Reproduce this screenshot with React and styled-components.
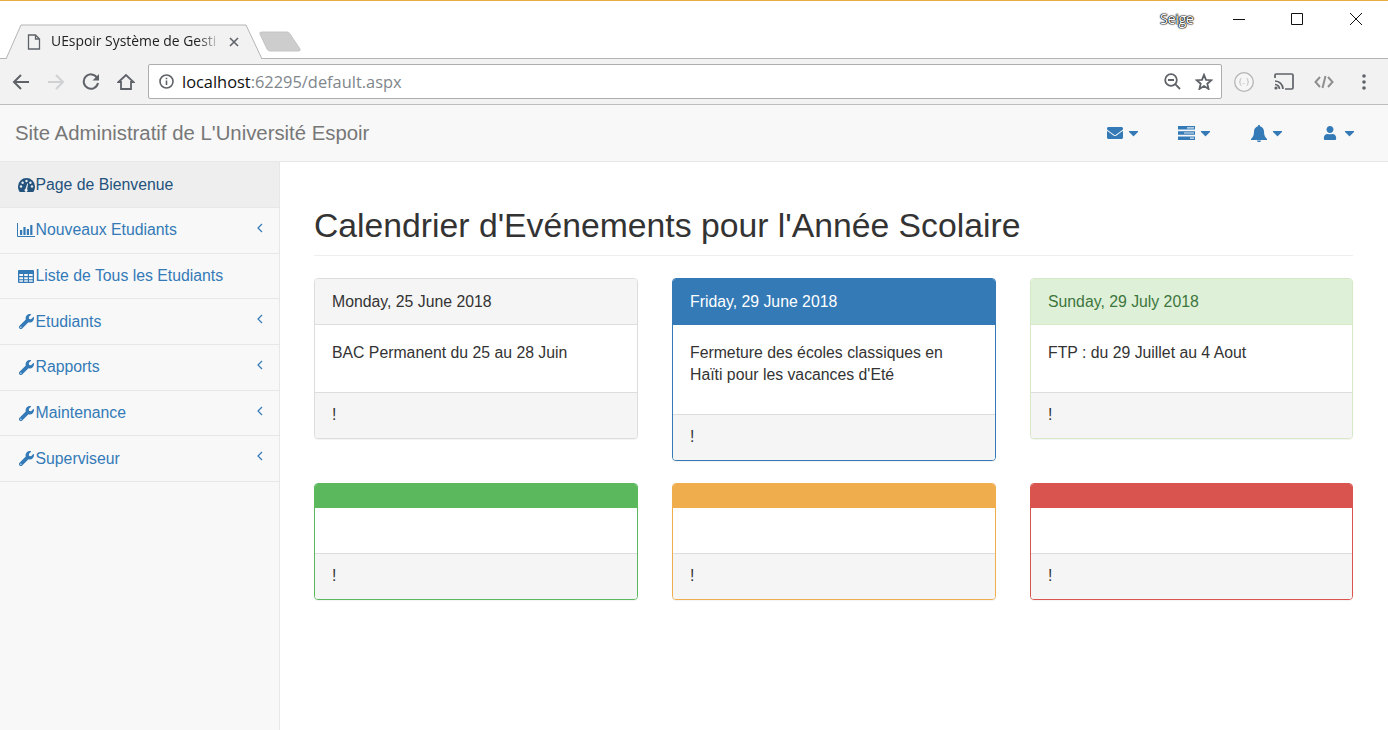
import React from "react";
import styled, { createGlobalStyle } from "styled-components";
import { FaEnvelope, FaUser, FaCaretDown, FaWrench } from "react-icons/fa";

const Global = createGlobalStyle`
  html, body { margin: 0; padding: 0; height: 100%; overflow: hidden; background: #fff; }
  body { font-family: "Liberation Sans", Arial, sans-serif; font-size: 15.8px; line-height: 22px; color: #333; }
  * { box-sizing: border-box; }
`;

const Page = styled.div`
  width: 1388px; height: 730px; display: flex; flex-direction: column; overflow: hidden;
  border-top: 1px solid #e9ac3e;
`;
const TabStrip = styled.div`
  height: 57px; display: flex; align-items: flex-end; background: #fff; position: relative; z-index: 1;
`;
const Tab = styled.div`
  position: relative; width: 258px; height: 35px; margin-left: 5px; margin-bottom: -1px; flex: none;
  display: flex; align-items: center; padding: 0 0 0 22px;
  font-family: "Open Sans", "Noto Sans", sans-serif; font-size: 13.9px; color: #222;
`;
const TabShape = styled.svg`position: absolute; left: 0; top: 0;`;
const TabIcon = styled.svg`position: relative; margin-right: 10px; flex: none;`;
const TabTitle = styled.span`
  position: relative; width: 178px; white-space: nowrap; padding-bottom: 2px;
  -webkit-mask-image: linear-gradient(90deg, #000 82%, transparent 96%);
  mask-image: linear-gradient(90deg, #000 82%, transparent 96%);
`;
const TabClose = styled.svg`position: relative; flex: none;`;
const NewTab = styled.svg`margin: 0 0 3px -5px; flex: none;`;
const WindowArea = styled.div`
  margin-left: auto; align-self: flex-start; height: 36px; display: flex; align-items: center;
`;
const UserName = styled.span`
  width: 36px; margin-right: 37px; font-family: "Open Sans", sans-serif; font-size: 14.4px; color: #fff; letter-spacing: -.4px;
  text-shadow: 0 0 1px #000, 0 0 1px #000, 0 0 2px #000, 0 0 1px #000;
`;
const WinButton = styled.svg`display: block; margin-right: ${p => p.$mr}px; flex: none;`;

const Toolbar = styled.div`
  height: 47px; display: flex; align-items: center; padding: 0 4px 0 3px; background: #f2f2f2;
  border-top: 1px solid #b4b4b4; border-bottom: 1px solid #bdbdbd;
`;
const NavBtn = styled.div`
  width: 35px; height: 36px; display: flex; align-items: center; justify-content: center; flex: none;
`;
const SideBtn = styled(NavBtn)`width: 40px;`;
const Address = styled.div`
  flex: 1; height: 35px; margin: 0 2px 0 5px; background: #fff; border: 1px solid #adadad; border-radius: 2px;
  display: flex; align-items: center; padding: 0 8px 0 10px;
  font-family: "Open Sans", "Noto Sans", sans-serif; font-size: 16.4px;
`;
const Url = styled.span`margin-left: 8px; color: #111; flex: 1;`;
const UrlRest = styled.span`color: #80868b;`;
const AddrIcon = styled.svg`margin-left: ${p => p.$ml || 0}px; flex: none;`;

const Navbar = styled.div`
  height: 57px; flex: none; display: flex; align-items: center; background: #f8f8f8; border-bottom: 1px solid #e7e7e7;
  padding: 0 33px 0 15px;
`;
const Brand = styled.div`font-size: 20.35px; color: #777; flex: 1;`;
const NavItem = styled.div`
  width: ${p => p.$w}px; display: flex; align-items: center; color: #337ab7; font-size: 16px;
`;
const Caret = styled(FaCaretDown)`margin-left: ${p => p.$ml || 5}px; width: 11px; height: 16px;`;
const NavGlyph = styled.svg`flex: none;`;

const Main = styled.div`flex: 1; display: flex; min-height: 0;`;
const Sidebar = styled.nav`
  width: 280px; flex: none; background: #f8f8f8; border-right: 1px solid #e7e7e7;
`;
const SideRow = styled.div`
  height: ${p => (p.$active ? "46px" : "45.67px")}; display: flex; align-items: center; padding: ${p => (p.$active ? "1px" : "0.3px")} 16px 0 17px;
  border-bottom: 1px solid #e7e7e7;
  color: ${p => (p.$active ? "#23527c" : "#337ab7")};
  background: ${p => (p.$active ? "#eee" : "transparent")};
`;
const IconSlot = styled.span`
  width: ${p => p.$w || 18.5}px; height: 16px; display: flex; align-items: center; justify-content: center; flex: none; margin-left: ${p => p.$ml || 0}px;
`;
const ChevronIcon = styled.svg`margin-left: auto; margin-top: -5px; flex: none;`;

const Content = styled.main`flex: 1; padding: 41px 35px 0 34px; min-width: 0;`;
const Header = styled.div`
  border-bottom: 1px solid #eee; padding-bottom: 7px; margin-bottom: 22px;
`;
const Title = styled.h1`
  margin: 0; font-size: 33.72px; font-weight: 400; line-height: 45px; color: #333;
`;
const Cards = styled.div`
  display: grid; grid-template-columns: 324px 324px 1fr; gap: 22px 34px; align-items: start;
`;
const themes = {
  default: { border: "#ddd", head: "#f5f5f5", color: "#333" },
  primary: { border: "#337ab7", head: "#337ab7", color: "#fff" },
  success: { border: "#d6e9c6", head: "#dff0d8", color: "#3c763d" },
  green: { border: "#5cb85c", head: "#5cb85c", color: "#fff" },
  yellow: { border: "#f0ad4e", head: "#f0ad4e", color: "#fff" },
  red: { border: "#d9534f", head: "#d9534f", color: "#fff" },
};
const Card = styled.section`
  background: #fff; border: 1px solid ${p => themes[p.$kind].border}; border-radius: 4px; overflow: hidden;
  box-shadow: 0 1px 1px rgba(0,0,0,.05);
`;
const CardHead = styled.div`
  height: ${p => (p.$empty ? 24 : 46)}px; padding: 12px 17px 0; background: ${p => themes[p.$kind].head}; color: ${p => themes[p.$kind].color};
  ${p => (p.$empty ? "" : `border-bottom: 1px solid ${themes[p.$kind].border};`)}
`;
const CardBody = styled.div`
  padding: 17px 17px 28px; white-space: pre-line;
  ${p => (p.$empty ? "padding: 0; height: 45px;" : "")}
`;
const CardFoot = styled.div`
  height: 46px; padding: 0 17px 2px; background: #f5f5f5; border-top: 1px solid #ddd; display: flex; align-items: center;
`;

const P = { fill: "none", stroke: "#5f6368", strokeWidth: 2 };

function Back() {
  return <svg width="18" height="18" viewBox="0 0 18 18"><path d="M17 9H2M9 2 2 9l7 7" fill="none" stroke="#5f6368" strokeWidth="2" /></svg>;
}
function Forward() {
  return <svg width="18" height="18" viewBox="0 0 18 18"><path d="M1 9h15M9 2l7 7-7 7" fill="none" stroke="#cfd1d3" strokeWidth="2" /></svg>;
}
function Reload() {
  return <svg width="18" height="18" viewBox="0 0 18 18"><path d="M15.200 5A7.200 7.200 0 1 0 16 10" {...P} /><path d="M17 1v6.500h-6.500z" fill="#5f6368" /></svg>;
}
function Home() {
  return <svg width="18" height="18" viewBox="0 0 18 18"><path d="M1.500 9 9 2l7.500 7H14v7H4V9z" {...P} strokeWidth="1.800" /></svg>;
}
function TasksGlyph() {
  return (
    <NavGlyph width="17" height="14" viewBox="0 0 17 14">
      <path d="M0 0h17v3.600H0zM0 5.200h17v3.600H0zM0 10.400h17V14H0z" fill="#337ab7" />
      <path d="M9 1.200h7v1.200H9zM6 6.400h10v1.200H6zM12 11.600h4v1.200h-4z" fill="#dfe9f3" />
    </NavGlyph>
  );
}
function BellGlyph() {
  return (
    <NavGlyph width="16" height="17" viewBox="0 0 16 17">
      <path fill="#337ab7" d="M8 0a1 1 0 0 1 1 1.200C11.500 1.800 13 4 13 6.500c0 4 1 5.500 3 7.500v.9H0V14c2-2 3-3.500 3-7.500C3 4 4.500 1.800 7 1.200A1 1 0 0 1 8 0zM6 15.600h4a2 1.500 0 0 1-4 0z" />
    </NavGlyph>
  );
}
function ChartGlyph() {
  return (
    <svg width="18" height="14" viewBox="0 0 18 14">
      <path d="M.5 0v13.500H18" fill="none" stroke="#337ab7" />
      <path d="M3 7h2.200v5H3zM6.400 4h2.200v8H6.400zM9.800 6h2.200v6H9.800zM13.200 2h2.200v10h-2.200z" fill="#337ab7" />
    </svg>
  );
}
function TableGlyph() {
  return (
    <svg width="16" height="13" viewBox="0 0 16 13">
      <path fillRule="evenodd" fill="#337ab7" d="M1 0h14q1 0 1 1v11q0 1-1 1H1q-1 0-1-1V1q0-1 1-1zM1.300 4v2h3.700V4zM6.200 4v2h3.600V4zM11 4v2h3.700V4zM1.300 7.200v2h3.700v-2zM6.200 7.200v2h3.600v-2zM11 7.200v2h3.700v-2zM1.300 10.300v1.500h3.700v-1.500zM6.200 10.300v1.500h3.600v-1.500zM11 10.300v1.500h3.700v-1.500z" />
    </svg>
  );
}
function GaugeGlyph() {
  return (
    <svg width="17" height="14" viewBox="0 0 17 14">
      <path fill="#23527c" d="M8.500 0a8.500 8.500 0 0 1 8.500 8.500c0 2-.6 3.900-1.700 5.500H1.700C.6 12.400 0 10.500 0 8.500A8.500 8.500 0 0 1 8.500 0z" />
      <g fill="#eee">
        <circle cx="3" cy="8.500" r="1.200" /><circle cx="4.600" cy="4.700" r="1.200" /><circle cx="8.500" cy="3" r="1.200" /><circle cx="12.400" cy="4.700" r="1.200" /><circle cx="14" cy="8.500" r="1.200" />
        <path d="M7.400 11 9.300 5.500l.8.200-1 5.500a1.500 1.500 0 1 1-1.700-.2z" />
      </g>
    </svg>
  );
}
function Chevron() {
  return (
    <ChevronIcon width="6" height="10" viewBox="0 0 6 10">
      <path d="M5 1 1 5l4 4" fill="none" stroke="#337ab7" strokeWidth="1.200" />
    </ChevronIcon>
  );
}

const data = [
  { kind: "default", date: "Monday, 25 June 2018", text: "BAC Permanent du 25 au 28 Juin" },
  { kind: "primary", date: "Friday, 29 June 2018", text: "Fermeture des écoles classiques en\nHaïti pour les vacances d'Eté" },
  { kind: "success", date: "Sunday, 29 July 2018", text: "FTP : du 29 Juillet au 4 Aout" },
  { kind: "green" },
  { kind: "yellow" },
  { kind: "red" },
];

const wrench = <IconSlot><FaWrench size={15} /></IconSlot>;
const menu = [
  { label: "Nouveaux Etudiants", icon: <IconSlot $ml={-1} $w={19.5}><ChartGlyph /></IconSlot>, more: true },
  { label: "Liste de Tous les Etudiants", icon: <IconSlot><TableGlyph /></IconSlot> },
  { label: "Etudiants", icon: wrench, more: true },
  { label: "Rapports", icon: wrench, more: true },
  { label: "Maintenance", icon: wrench, more: true },
  { label: "Superviseur", icon: wrench, more: true },
];

export default function App() {
  return (
    <>
      <Global />
      <Page>
        <TabStrip>
          <Tab>
            <TabShape width="258" height="35" viewBox="0 0 258 35">
              <path d="M1 35 16 1h225l16 34z" fill="#f2f2f2" />
              <path d="M1 35 16 1h225l16 34" fill="none" stroke="#b4b4b4" />
            </TabShape>
            <TabIcon width="14" height="16" viewBox="0 0 14 16">
              <path d="M1.500 1h7L12.500 5v10h-11zM8.500 1v4h4" fill="none" stroke="#5f6368" strokeWidth="1.300" />
            </TabIcon>
            <TabTitle>UEspoir Système de Gesti</TabTitle>
            <TabClose width="10" height="10" viewBox="0 0 10 10">
              <path d="M1 1l8 8M9 1 1 9" stroke="#5f6368" strokeWidth="1.600" />
            </TabClose>
          </Tab>
          <NewTab width="46" height="24" viewBox="0 0 46 24">
            <path d="M2 3q-1-2 2-2h25q2 0 3 2l10 15q1 2-2 2H12q-2 0-3-2z" fill="#cdcdcd" stroke="#c4c4c4" />
          </NewTab>
          <WindowArea>
            <UserName>Seige</UserName>
            <WinButton $mr={46} width="12" height="12" viewBox="0 0 12 12"><path d="M0 6.500h12" stroke="#111" /></WinButton>
            <WinButton $mr={47} width="12" height="12" viewBox="0 0 12 12"><path d="M.5.500h11v11H.5z" fill="none" stroke="#111" /></WinButton>
            <WinButton $mr={26} width="12" height="12" viewBox="0 0 12 12"><path d="M0 0l12 12M12 0 0 12" stroke="#111" /></WinButton>
          </WindowArea>
        </TabStrip>
        <Toolbar>
          <NavBtn><Back /></NavBtn>
          <NavBtn><Forward /></NavBtn>
          <NavBtn><Reload /></NavBtn>
          <NavBtn><Home /></NavBtn>
          <Address>
            <AddrIcon width="15" height="15" viewBox="0 0 15 15">
              <circle cx="7.500" cy="7.500" r="6.500" fill="none" stroke="#5f6368" strokeWidth="1.600" />
              <path d="M6.700 6.500h1.600v4.500H6.700zM6.700 3.700h1.600v1.600H6.700z" fill="#5f6368" />
            </AddrIcon>
            <Url>localhost<UrlRest>:62295/default.aspx</UrlRest></Url>
            <AddrIcon width="17" height="17" viewBox="0 0 17 17">
              <circle cx="7" cy="7" r="5.800" fill="none" stroke="#5f6368" strokeWidth="1.800" />
              <path d="M4 7h6M11.200 11.200 16 16" stroke="#5f6368" strokeWidth="1.800" />
            </AddrIcon>
            <AddrIcon $ml={14} width="18" height="17" viewBox="0 0 18 17">
              <path d="M9 1.800 11 6.800l5.500.4-4.200 3.500 1.300 5.300L9 13l-4.600 3 1.300-5.300L1.500 7.200 7 6.800z" fill="none" stroke="#5f6368" strokeWidth="1.800" />
            </AddrIcon>
          </Address>
          <SideBtn>
            <svg width="20" height="20" viewBox="0 0 20 20">
              <circle cx="10" cy="10" r="9.300" fill="#f6f6f6" stroke="#b5b5b5" strokeWidth="1.300" />
              <path d="M7.500 6.500q-1.300 0-1.300 1.300v1.300q0 .9-.9.9.9 0 .9.900v1.300q0 1.300 1.300 1.300M12.500 6.500q1.300 0 1.300 1.300v1.300q0 .9.900.9-.9 0-.9.900v1.300q0 1.300-1.300 1.300M8.500 11.500h.8M9.800 11.500h.8" fill="none" stroke="#b5b5b5" strokeWidth=".8" />
            </svg>
          </SideBtn>
          <SideBtn>
            <svg width="20" height="17" viewBox="0 0 20 17">
              <path d="M1 5V2.200Q1 1 2.200 1h15.600Q19 1 19 2.200v12.600q0 1.200-1.200 1.200H11" fill="none" stroke="#5f6368" strokeWidth="1.700" />
              <path d="M1 8a8 8 0 0 1 8 8M1 11.500A4.500 4.500 0 0 1 5.500 16" fill="none" stroke="#5f6368" strokeWidth="1.700" />
              <circle cx="2" cy="15" r="1.600" fill="#5f6368" />
            </svg>
          </SideBtn>
          <SideBtn>
            <svg width="20" height="14" viewBox="0 0 20 14">
              <path d="M6 2 1.500 7 6 12M14 2l4.500 5L14 12M11.500 1 8.500 13" fill="none" stroke="#8f8f8f" strokeWidth="2" />
            </svg>
          </SideBtn>
          <SideBtn>
            <svg width="4" height="16" viewBox="0 0 4 16">
              <circle cx="2" cy="2" r="1.800" fill="#5f6368" /><circle cx="2" cy="8" r="1.800" fill="#5f6368" /><circle cx="2" cy="14" r="1.800" fill="#5f6368" />
            </svg>
          </SideBtn>
        </Toolbar>
        <Navbar>
          <Brand>Site Administratif de L'Université Espoir</Brand>
          <NavItem $w={71}><FaEnvelope size={16} /><Caret /></NavItem>
          <NavItem $w={73}><TasksGlyph /><Caret /></NavItem>
          <NavItem $w={72}><BellGlyph /><Caret /></NavItem>
          <NavItem $w={32}><FaUser size={14} /><Caret $ml={7} /></NavItem>
        </Navbar>
        <Main>
          <Sidebar>
            <SideRow $active><IconSlot><GaugeGlyph /></IconSlot>Page de Bienvenue</SideRow>
            {menu.map(m => (
              <SideRow key={m.label}>
                {m.icon}{m.label}
                {m.more && <Chevron />}
              </SideRow>
            ))}
          </Sidebar>
          <Content>
            <Header><Title>Calendrier d'Evénements pour l'Année Scolaire</Title></Header>
            <Cards>
              {data.map(c => (
                <Card key={c.kind} $kind={c.kind}>
                  <CardHead $kind={c.kind} $empty={!c.date}>{c.date}</CardHead>
                  <CardBody $empty={!c.text}>{c.text}</CardBody>
                  <CardFoot>!</CardFoot>
                </Card>
              ))}
            </Cards>
          </Content>
        </Main>
      </Page>
    </>
  );
}
